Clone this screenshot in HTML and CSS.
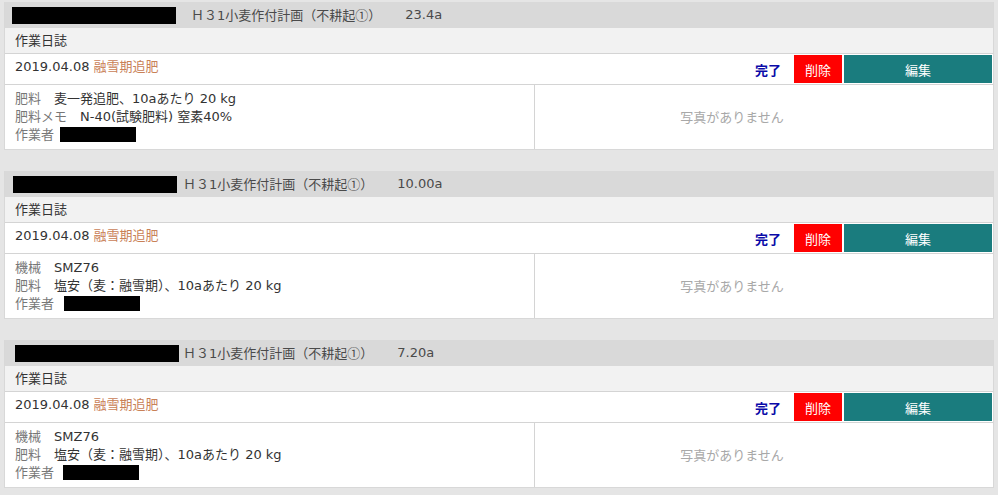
FILE: index.html
```html
<!DOCTYPE html>
<html lang="ja">
<head>
    <meta charset="UTF-8">
    <meta name="viewport" content="width=device-width, initial-scale=1.0">
    <title>作業日誌</title>
    <link rel="stylesheet" href="styles.css">
</head>
<body>
    <div class="list">
        <div class="card">
            <div class="card-head">
                <span class="mask mask-head" style="width:164px"></span>
                <span class="plan" style="margin-left:15px">Ｈ３1小麦作付計画（不耕起<span class="cjk">①</span>）</span>
                <span class="area">23.4a</span>
            </div>
            <div class="kind">作業日誌</div>
            <div class="date-row">
                <div class="date">2019.04.08 <span class="work">融雪期追肥</span></div>
                <a class="done">完了</a>
                <button class="btn del">削除</button>
                <button class="btn edit">編集</button>
            </div>
            <div class="detail">
                <div class="info">
                    <div><span class="label">肥料</span>　麦一発追肥、10aあたり 20 kg</div>
                    <div><span class="label">肥料メモ</span>　N-40(試験肥料) 窒素40%</div>
                    <div><span class="label">作業者</span><span class="mask mask-worker"></span></div>
                </div>
                <div class="photo">写真がありません</div>
            </div>
        </div>

        <div class="card">
            <div class="card-head">
                <span class="mask mask-head" style="width:164px;margin-left:1px"></span>
                <span class="plan" style="margin-left:6px">Ｈ３1小麦作付計画（不耕起<span class="cjk">①</span>）</span>
                <span class="area">10.00a</span>
            </div>
            <div class="kind">作業日誌</div>
            <div class="date-row">
                <div class="date">2019.04.08 <span class="work">融雪期追肥</span></div>
                <a class="done">完了</a>
                <button class="btn del">削除</button>
                <button class="btn edit">編集</button>
            </div>
            <div class="detail">
                <div class="info">
                    <div><span class="label">機械</span>　SMZ76</div>
                    <div><span class="label">肥料</span>　塩安（麦：融雪期）、10aあたり 20 kg</div>
                    <div><span class="label">作業者</span><span class="mask mask-worker" style="margin-left:10px"></span></div>
                </div>
                <div class="photo">写真がありません</div>
            </div>
        </div>

        <div class="card">
            <div class="card-head">
                <span class="mask mask-head" style="width:164px;margin-left:3px"></span>
                <span class="plan" style="margin-left:4px">Ｈ３1小麦作付計画（不耕起<span class="cjk">①</span>）</span>
                <span class="area">7.20a</span>
            </div>
            <div class="kind">作業日誌</div>
            <div class="date-row">
                <div class="date">2019.04.08 <span class="work">融雪期追肥</span></div>
                <a class="done">完了</a>
                <button class="btn del">削除</button>
                <button class="btn edit">編集</button>
            </div>
            <div class="detail">
                <div class="info">
                    <div><span class="label">機械</span>　SMZ76</div>
                    <div><span class="label">肥料</span>　塩安（麦：融雪期）、10aあたり 20 kg</div>
                    <div><span class="label">作業者</span><span class="mask mask-worker" style="margin-left:9px"></span></div>
                </div>
                <div class="photo">写真がありません</div>
            </div>
        </div>
    </div>
</body>
</html>
```

FILE: styles.css
```css
body {
    margin: 0;
    background-color: #e5e5e5;
    font-family: "DejaVu Sans", "Noto Sans CJK JP", sans-serif;
    font-size: 13px;
    color: #333;
}
.cjk {
    font-family: "Noto Sans CJK JP", sans-serif;
}
.list {
    padding: 2px 4px 0 4px;
}
.card {
    background: #fff;
    border: 1px solid #d8d8d8;
    border-top: none;
    margin-bottom: 21px;
}
.card-head {
    display: flex;
    align-items: center;
    height: 26px;
    padding-left: 7px;
    background: #d9d9d9;
    color: #4a4a4a;
    line-height: 18px;
}
.mask {
    display: inline-block;
    background: #000;
}
.mask-head {
    height: 17px;
}
.area {
    margin-left: 24px;
}
.kind {
    height: 25px;
    line-height: 25px;
    padding-left: 10px;
    background: #f2f2f2;
    border-bottom: 1px solid #d4d4d4;
}
.date-row {
    display: flex;
    align-items: center;
    height: 30px;
    border-bottom: 1px solid #d4d4d4;
}
.date {
    flex: 1;
    padding-left: 10px;
    padding-bottom: 4px;
    line-height: 18px;
}
.work {
    color: #c98157; /* brownish orange */
}
.done {
    color: #0a0aa8;
    font-weight: bold;
    margin-right: 13px;
    cursor: pointer;
}
.btn {
    height: 28px;
    border: none;
    color: #fff;
    font-family: inherit;
    font-size: 13px;
    cursor: pointer;
}
.del {
    width: 48px;
    background-color: #ff0000;
    margin-right: 2px;
}
.edit {
    width: 148px;
    background-color: #1a7c7e;
    margin-right: 1px;
}
.detail {
    display: flex;
    height: 64px;
}
.info {
    width: 509px;
    padding: 5px 10px;
    line-height: 18px;
    border-right: 1px solid #d4d4d4;
}
.label {
    color: #777;
}
.mask-worker {
    width: 76px;
    height: 15px;
    margin-left: 6px;
    vertical-align: -3px;
}
.photo {
    flex: 1;
    display: flex;
    align-items: center;
    justify-content: center;
    padding-right: 64px;
    padding-bottom: 2px;
    color: #a8a8a8;
}
```
